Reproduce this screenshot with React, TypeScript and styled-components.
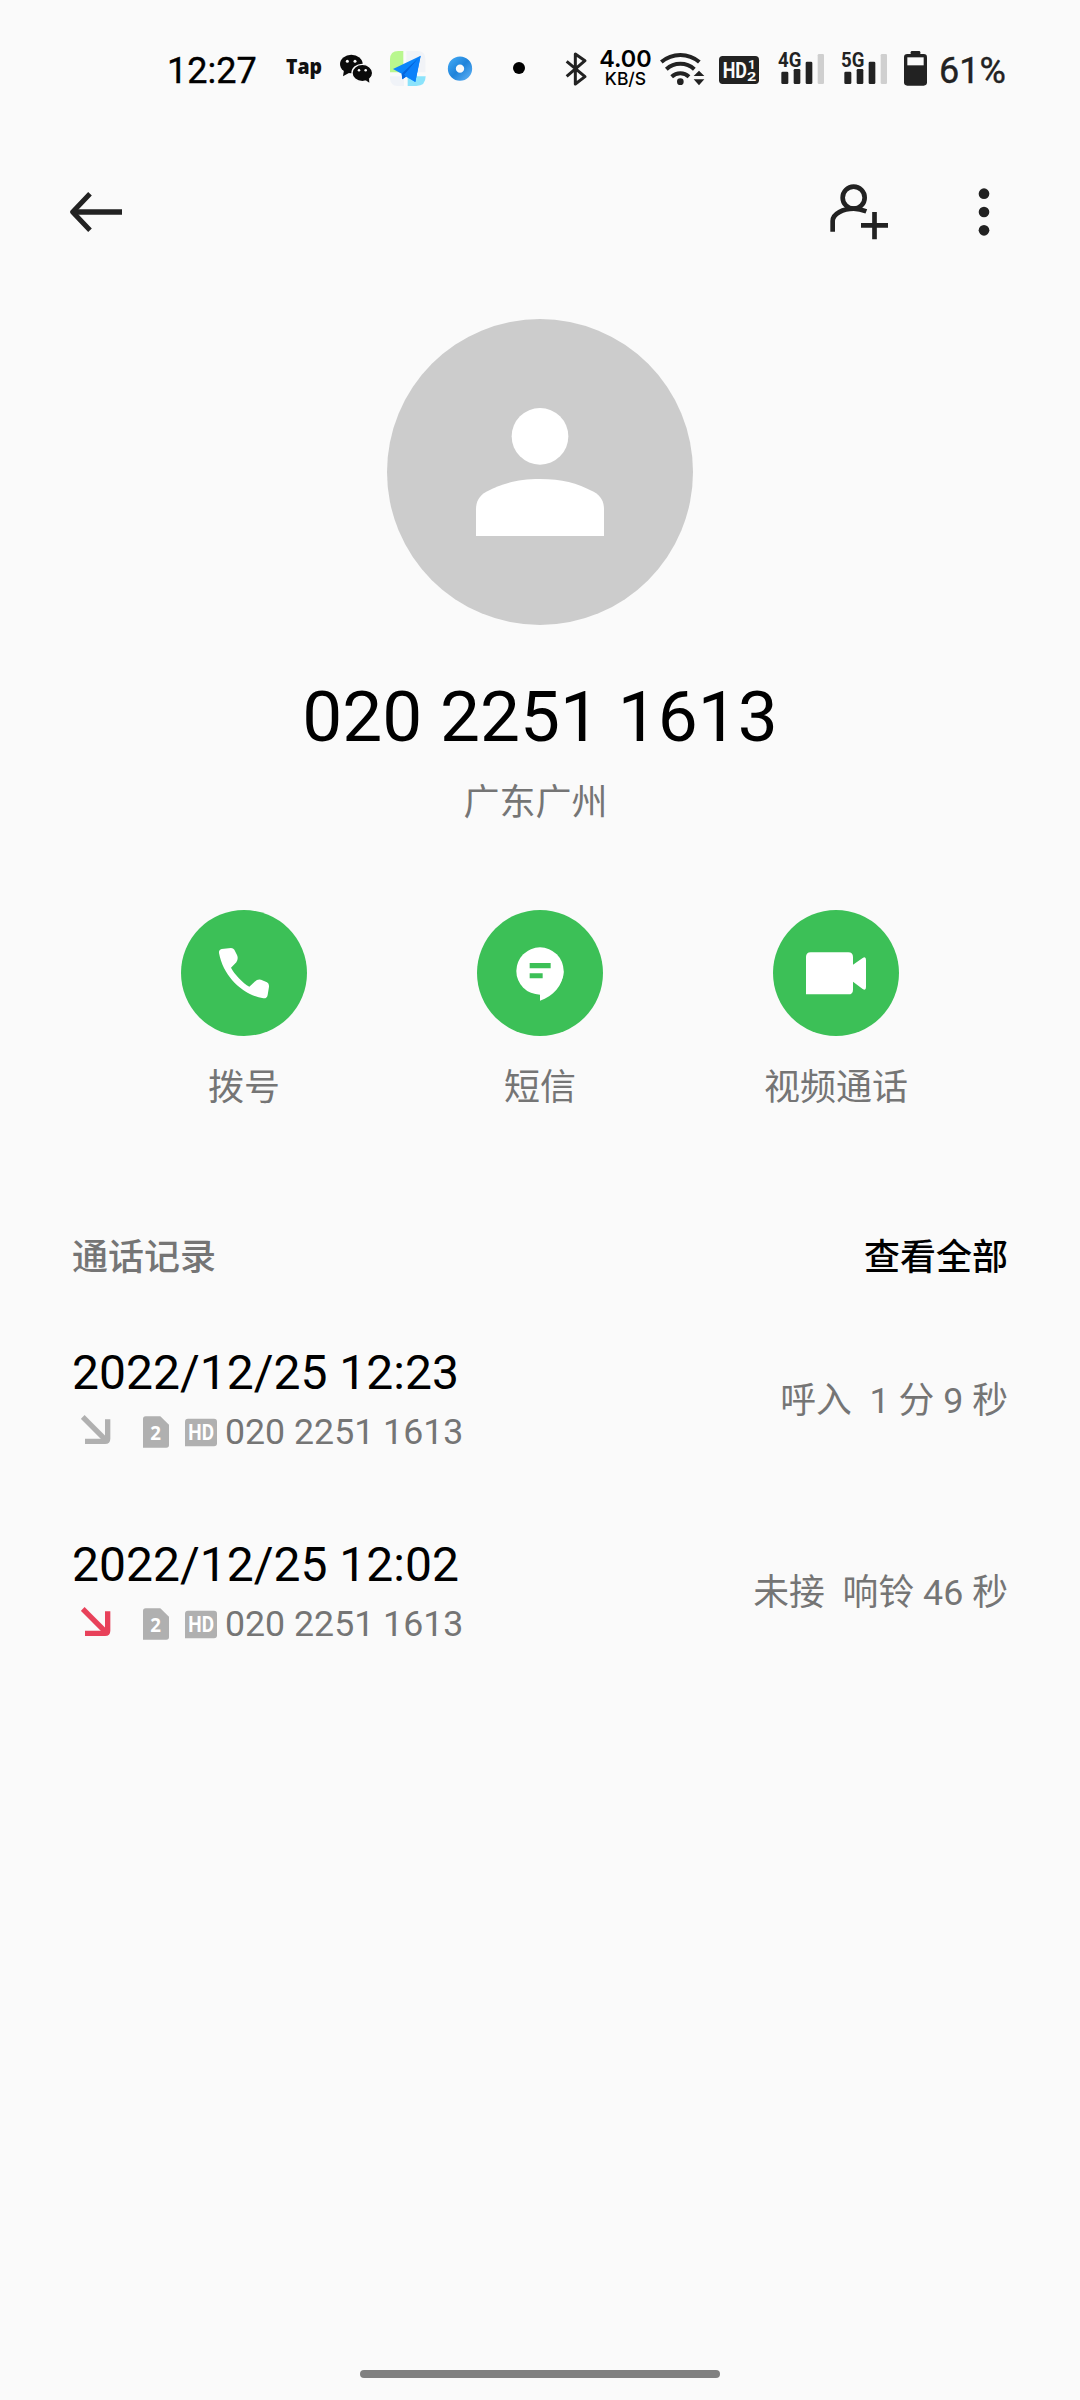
import React from "react";
import styled, { createGlobalStyle } from "styled-components";

const INK = "#222222";
const BG = "#fafafa";
const GREEN = "#3cc057";

const GlobalStyle = createGlobalStyle`
  body {
    margin: 0;
    background: ${BG};
  }
`;

const Screen = styled.div`
  display: flex;
  flex-direction: column;
  width: 1080px;
  height: 2400px;
  background: ${BG};
  color: #000;
  font-family: Roboto, "Noto Sans CJK SC", sans-serif;
  overflow: hidden;
`;

/* ---------- status bar ---------- */

const StatusBar = styled.header`
  display: flex;
  box-sizing: border-box;
  height: 105px;
  padding: 48px 0 0 167px;
`;

const StatusText = styled.span<{ $gap?: number; $width: number; $color: string }>`
  flex: none;
  width: ${(p) => p.$width}px;
  margin-left: ${(p) => p.$gap ?? 0}px;
  color: ${(p) => p.$color};
  font-size: 36px;
  font-weight: 400;
  -webkit-text-stroke: 0.4px ${(p) => p.$color};
  line-height: 46px;
  white-space: nowrap;
`;

const StatusIcon = styled.svg<{ $gap: number }>`
  flex: none;
  display: block;
  height: 40px;
  margin-left: ${(p) => p.$gap}px;
  overflow: visible;
`;

const Speed = styled.div`
  display: flex;
  flex: none;
  flex-direction: column;
  align-items: center;
  gap: 3px;
  width: 55px;
  margin-left: 10px;
  padding-top: 2px;
  font-family: Inter, sans-serif;
  white-space: nowrap;
`;

const SpeedValue = styled.span`
  font-size: 23.4px;
  font-weight: 600;
  line-height: 18px;
`;

const SpeedUnit = styled.span`
  font-size: 17.5px;
  font-weight: 500;
  line-height: 16px;
`;

/* ---------- toolbar ---------- */

const Toolbar = styled.nav`
  display: flex;
  align-items: center;
  box-sizing: border-box;
  height: 214px;
  padding: 0 90px 0 70px;
`;

const IconButton = styled.button<{ $push?: boolean; $gap?: number }>`
  display: flex;
  padding: 0;
  border: 0;
  background: none;
  margin-left: ${(p) => (p.$push ? "auto" : `${p.$gap ?? 0}px`)};
`;

/* ---------- contact ---------- */

const Contact = styled.section`
  display: flex;
  flex-direction: column;
  align-items: center;
`;

const Avatar = styled.div`
  width: 306px;
  height: 306px;
  border-radius: 50%;
  background: #cccccc;
`;

const Round = styled.svg`
  display: block;
  width: 100%;
  height: 100%;
`;

const PhoneTitle = styled.h1`
  margin: 50px 0 0;
  font-size: 71.2px;
  font-weight: 400;
  line-height: 84px;
`;

const Region = styled.p`
  margin: 23px 0 0;
  padding-right: 9px;
  color: #757575;
  font-size: 36px;
  line-height: 42px;
`;

const Actions = styled.div`
  display: grid;
  grid-template-columns: repeat(3, 296px);
  justify-content: center;
  margin-top: 86px;
`;

const Action = styled.div`
  display: flex;
  flex-direction: column;
  align-items: center;
  gap: 31px;
`;

const ActionCircle = styled.button`
  width: 126px;
  height: 126px;
  padding: 0;
  border: 0;
  border-radius: 50%;
  background: ${GREEN};
`;

const ActionLabel = styled.span`
  color: #757575;
  font-size: 36px;
  line-height: 42px;
`;

/* ---------- call log ---------- */

const Log = styled.section`
  flex: 1;
  padding: 128px 72px 0;
`;

const LogHeader = styled.div`
  display: flex;
  justify-content: space-between;
  margin-bottom: 66px;
  font-size: 36px;
  font-weight: 500;
  line-height: 42px;
`;

const LogTitle = styled.span`
  color: #757575;
`;

const SeeAll = styled.span`
  color: #000;
`;

const LogList = styled.div`
  display: flex;
  flex-direction: column;
  gap: 87px;
`;

const LogRow = styled.div`
  display: flex;
  justify-content: space-between;
  align-items: center;
  height: 105px;
`;

const LogMain = styled.div`
  display: flex;
  flex-direction: column;
  gap: 13px;
`;

const LogDate = styled.span`
  font-size: 48px;
  line-height: 56px;
`;

const LogMeta = styled.div`
  display: flex;
  height: 36px;
  padding-left: 9px;
`;

const MetaIcon = styled.svg<{ $gap?: number }>`
  flex: none;
  display: block;
  height: 36px;
  margin-left: ${(p) => p.$gap ?? 0}px;
`;

const LogNumber = styled.span`
  margin-left: 8px;
  color: #757575;
  font-size: 35.7px;
  line-height: 37px;
`;

const LogDuration = styled.span`
  padding-top: 6px;
  color: #757575;
  font-size: 35.8px;
  line-height: 42px;
  white-space: pre;
`;

const HomeArea = styled.footer`
  display: flex;
  justify-content: center;
  align-items: flex-start;
  height: 30px;
`;

const HomeBar = styled.div`
  width: 360px;
  height: 8px;
  border-radius: 4px;
  background: #808080;
`;

/* ---------- status icons, drawn on a grid of three units per pixel ---------- */

const TapIcon = () => (
  <StatusIcon $gap={29} width="37" viewBox="0 0 111 120">
    <text x="0" y="78" textLength="108" lengthAdjust="spacingAndGlyphs" fontFamily="Open Sans, sans-serif" fontWeight="800" fontSize="65" fill="#111">
      Tap
    </text>
  </StatusIcon>
);

const WechatIcon = () => (
  <StatusIcon $gap={17} width="33" viewBox="0 0 99 120">
    <ellipse cx="34" cy="48" rx="34" ry="28" fill="#0a0a0a" />
    <path d="M12 66 L9 85 L28 74Z" fill="#0a0a0a" />
    <ellipse cx="67" cy="75" rx="31" ry="26" fill="#0a0a0a" stroke={BG} strokeWidth="4" />
    <path d="M76 96 L88 104 L87 90Z" fill="#0a0a0a" />
    <circle cx="22" cy="40" r="4.5" fill={BG} />
    <circle cx="45" cy="40" r="4.5" fill={BG} />
    <circle cx="57" cy="67" r="3.8" fill={BG} />
    <circle cx="77" cy="67" r="3.8" fill={BG} />
  </StatusIcon>
);

const PlaneIcon = () => (
  <StatusIcon $gap={16} width="37" viewBox="0 0 111 120">
    <path d="M3 73V34Q3 9 28 9H43V73Z" fill="#b9f78f" />
    <path d="M52 9H86Q109 9 109 32V73H52Z" fill="#f1f3f7" />
    <path d="M3 85H45V114H24Q5 112 3 92Z" fill="#f0f3f8" />
    <path d="M56 85H110Q110 114 82 114H56Z" fill="#8be3fb" />
    <path d="M95 23 L12 63 L38 77 L40 94 L51 86 L79 102Z" fill="#0c86fb" />
    <path d="M38 77 L40 94 L51 86 L46 80 L95 23Z" fill="#0565dc" />
    <path d="M46 80 L95 23 L79 102Z" fill="#0c80fa" />
  </StatusIcon>
);

const RingIcon = () => (
  <StatusIcon $gap={21} width="26" viewBox="0 0 78 120">
    <defs>
      <linearGradient id="ring" x1="0" y1="0" x2="1" y2="1">
        <stop offset="0" stopColor="#3aa0ee" />
        <stop offset="0.5" stopColor="#1f83da" />
        <stop offset="1" stopColor="#4fa6ee" />
      </linearGradient>
    </defs>
    <circle cx="39" cy="62" r="24.5" fill="none" stroke="url(#ring)" strokeWidth="24" />
  </StatusIcon>
);

const DotIcon = () => (
  <StatusIcon $gap={40} width="12" viewBox="0 0 36 120">
    <circle cx="18" cy="60" r="18" fill="#000" />
  </StatusIcon>
);

const BluetoothIcon = () => (
  <StatusIcon $gap={40} width="23" viewBox="0 0 69 120">
    <path d="M5 40L60 86L31 108V18L60 38L5 85" fill="none" stroke={INK} strokeWidth="9" strokeLinejoin="round" />
  </StatusIcon>
);

const WifiIcon = () => (
  <StatusIcon $gap={7} width="45" viewBox="0 0 135 120">
    <g fill="none" stroke={INK} strokeWidth="12">
      <path d="M4 42A87 87 0 0 1 118 42" />
      <path d="M19 64A62 62 0 0 1 103 64" />
      <path d="M35 86A39 39 0 0 1 87 86" />
    </g>
    <circle cx="61" cy="101" r="10" fill={INK} />
    <path d="M101 84L117 68L133 84ZM101 94L117 112L133 94Z" fill={INK} />
  </StatusIcon>
);

const HdDualIcon = () => (
  <StatusIcon $gap={14} width="40" viewBox="0 0 120 120">
    <rect x="0" y="24" width="120" height="84" rx="11" fill={INK} />
    <g fontFamily="Roboto, sans-serif" fontWeight="700" fill={BG}>
      <text x="11" y="90" textLength="73" lengthAdjust="spacingAndGlyphs" fontSize="66">
        HD
      </text>
      <text x="87" y="63" fontSize="40">
        1
      </text>
      <text x="84" y="99" textLength="28" lengthAdjust="spacingAndGlyphs" fontSize="40">
        2
      </text>
    </g>
  </StatusIcon>
);

const SignalIcon = ({ label, gap }: { label: string; gap: number }) => (
  <StatusIcon $gap={gap} width="47" viewBox="0 0 141 120">
    <text x="0" y="57" textLength="70" lengthAdjust="spacingAndGlyphs" fontFamily="Roboto, sans-serif" fontWeight="700" fontSize="62" fill={INK}>
      {label}
    </text>
    <rect x="10" y="71" width="21" height="37" rx="4" fill={INK} />
    <rect x="47" y="63" width="20" height="45" rx="4" fill={INK} />
    <rect x="83" y="41" width="20" height="67" rx="4" fill={INK} />
    <rect x="119" y="18" width="19" height="90" rx="4" fill="#cfcfcf" />
  </StatusIcon>
);

const BatteryIcon = () => (
  <StatusIcon $gap={16} width="23" viewBox="0 0 69 120">
    <rect x="20" y="9" width="29" height="16" rx="4" fill={INK} />
    <rect x="0" y="18" width="69" height="95" rx="10" fill={INK} />
    <rect x="10" y="28" width="49" height="24" fill={BG} />
  </StatusIcon>
);

/* ---------- log icons ---------- */

const IncomingIcon = ({ color }: { color: string }) => (
  <MetaIcon width="30" viewBox="0 0 90 108">
    <path d="M5 9L76 80" stroke={color} strokeWidth="16" />
    <path d="M80 16V74Q80 82 72 82H12" fill="none" stroke={color} strokeWidth="16" />
  </MetaIcon>
);

const SimIcon = () => (
  <MetaIcon $gap={32} width="26" viewBox="0 0 78 108">
    <path d="M8 7H52L78 32V93Q78 101 70 101H0V15Q0 7 8 7Z" fill="#b0b0b0" />
    <text x="38" y="77" textAnchor="middle" fontFamily="Noto Sans, sans-serif" fontWeight="700" fontSize="56" fill="#fff">
      2
    </text>
  </MetaIcon>
);

const HdIcon = () => (
  <MetaIcon $gap={16} width="32" viewBox="0 0 96 108">
    <path d="M9 14H87Q96 14 96 23V88Q96 97 87 97H0V23Q0 14 9 14Z" fill="#b0b0b0" />
    <text x="10" y="78" textLength="77" lengthAdjust="spacingAndGlyphs" fontFamily="Roboto, sans-serif" fontWeight="700" fontSize="66" fill="#fff">
      HD
    </text>
  </MetaIcon>
);

/* ---------- action glyphs ---------- */

const CallGlyph = () => (
  <Round viewBox="0 0 378 378">
    <path
      d="M122 117L150 114Q157 114 160 119L168 135Q173 146 166 157L150 173C160 192 185 219 205 230L221 215Q230 206 240 209L258 217Q265 221 264 230L260 255Q258 266 247 265C185 254 127 200 114 129Q113 119 122 117Z"
      fill="#fff"
    />
  </Round>
);

const MessageGlyph = () => (
  <Round viewBox="0 0 378 378">
    <circle cx="189" cy="183" r="71" fill="#fff" />
    <path d="M189 250V272C228 258 258 228 260 183Z" fill="#fff" />
    <path d="M158 159H221V175H158ZM158 190H197V205H158Z" fill={GREEN} />
  </Round>
);

const VideoGlyph = () => (
  <Round viewBox="0 0 378 378">
    <path
      d="M113 127H226Q240 127 240 141V164L269 144Q279 138 279 150V231Q279 243 269 237L240 215V239Q240 253 226 253H99V141Q99 127 113 127Z"
      fill="#fff"
    />
  </Round>
);

const actions = [
  { label: "拨号", Glyph: CallGlyph },
  { label: "短信", Glyph: MessageGlyph },
  { label: "视频通话", Glyph: VideoGlyph },
];

const calls = [
  { date: "2022/12/25 12:23", number: "020 2251 1613", info: "呼入  1 分 9 秒", color: "#b0b0b0" },
  { date: "2022/12/25 12:02", number: "020 2251 1613", info: "未接  响铃 46 秒", color: "#e8415a" },
];

export default function App() {
  return (
    <>
      <GlobalStyle />
      <Screen>
        <StatusBar>
          <StatusText $width={90} $color="#000">
            12:27
          </StatusText>
          <TapIcon />
          <WechatIcon />
          <PlaneIcon />
          <RingIcon />
          <DotIcon />
          <BluetoothIcon />
          <Speed>
            <SpeedValue>4.00</SpeedValue>
            <SpeedUnit>KB/S</SpeedUnit>
          </Speed>
          <WifiIcon />
          <HdDualIcon />
          <SignalIcon label="4G" gap={19} />
          <SignalIcon label="5G" gap={16} />
          <BatteryIcon />
          <StatusText $gap={12} $width={70} $color={INK}>
            61%
          </StatusText>
        </StatusBar>

        <Toolbar>
          <IconButton aria-label="返回">
            <svg width="52" height="42" viewBox="0 0 156 126">
              <path d="M60 8L8 63L60 118" fill="none" stroke={INK} strokeWidth="15" strokeLinejoin="round" />
              <path d="M10 63H156" stroke={INK} strokeWidth="16" />
            </svg>
          </IconButton>
          <IconButton $push aria-label="新建联系人">
            <svg width="58" height="56" viewBox="0 0 174 168">
              <g fill="none" stroke={INK} strokeWidth="14">
                <circle cx="71" cy="41" r="33" />
                <path d="M8 143V111C8 89 40 74 71 74C84 74 96 77 109 82" />
                <path d="M93 124H174M133.5 84V166" />
              </g>
            </svg>
          </IconButton>
          <IconButton $gap={90} aria-label="更多">
            <svg width="12" height="48" viewBox="0 0 36 144">
              <g fill={INK}>
                <circle cx="18" cy="17" r="16" />
                <circle cx="18" cy="72" r="16" />
                <circle cx="18" cy="127" r="16" />
              </g>
            </svg>
          </IconButton>
        </Toolbar>

        <Contact>
          <Avatar>
            <Round viewBox="0 0 918 918">
              <circle cx="459" cy="352" r="85" fill="#fff" />
              <path
                d="M267 651V571C267 547 277 530 298 518C350 492 392 480 459 480C526 480 568 492 620 518C641 530 651 547 651 571V651Z"
                fill="#fff"
              />
            </Round>
          </Avatar>
          <PhoneTitle>020 2251 1613</PhoneTitle>
          <Region>广东广州</Region>
        </Contact>

        <Actions>
          {actions.map(({ label, Glyph }) => (
            <Action key={label}>
              <ActionCircle aria-label={label}>
                <Glyph />
              </ActionCircle>
              <ActionLabel>{label}</ActionLabel>
            </Action>
          ))}
        </Actions>

        <Log>
          <LogHeader>
            <LogTitle>通话记录</LogTitle>
            <SeeAll>查看全部</SeeAll>
          </LogHeader>
          <LogList>
            {calls.map((call) => (
              <LogRow key={call.date}>
                <LogMain>
                  <LogDate>{call.date}</LogDate>
                  <LogMeta>
                    <IncomingIcon color={call.color} />
                    <SimIcon />
                    <HdIcon />
                    <LogNumber>{call.number}</LogNumber>
                  </LogMeta>
                </LogMain>
                <LogDuration>{call.info}</LogDuration>
              </LogRow>
            ))}
          </LogList>
        </Log>

        <HomeArea>
          <HomeBar />
        </HomeArea>
      </Screen>
    </>
  );
}
